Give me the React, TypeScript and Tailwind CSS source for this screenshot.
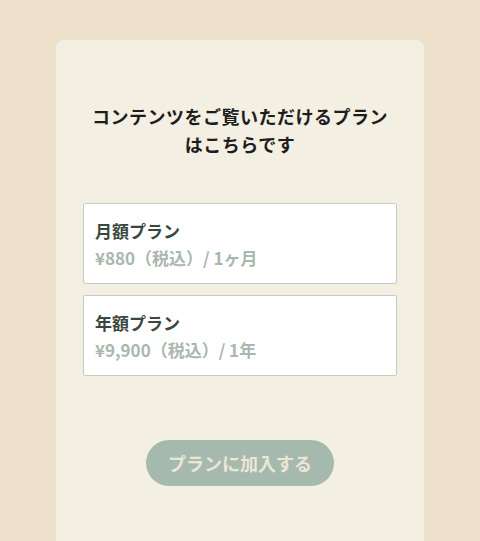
import React from "react";

const plans = [
  { id: "monthly", name: "月額プラン", price: "¥880（税込）/ 1ヶ月" },
  { id: "yearly", name: "年額プラン", price: "¥9,900（税込）/ 1年" },
];

export default function App() {
  return (
    <div
      className="min-h-[541px] bg-[#ede0ca] px-[56px] pt-[40px]"
      style={{ fontFamily: '"Noto Sans CJK JP", "Noto Sans", sans-serif' }}
    >
      <div className="min-h-[501px] rounded-t-[8px] bg-[#f3efe2] px-[27px] pt-[62px] pb-10">
        <h1 className="text-center text-[18px] font-bold leading-[28px] tracking-[0.5px] text-[#1d1d1d]">
          コンテンツをご覧いただけるプランはこちらです
        </h1>

        <ul className="mt-[45px] flex flex-col gap-[11px]">
          {plans.map((p) => (
            <li
              key={p.id}
              className="rounded-[2px] border border-[#c8cac3] bg-white px-[11px] pt-[13px] pb-[12px] leading-[27px]"
            >
              <div className="text-[17px] font-bold text-[#3b4840]">{p.name}</div>
              <div className="text-[17px] font-bold text-[#a9b7ae]">{p.price}</div>
            </li>
          ))}
        </ul>

        <div className="mt-[64px] flex justify-center">
          <button className="h-[46px] w-[188px] rounded-full bg-[#a6b9ae] text-[18px] font-bold text-[#ece6d6]">
            プランに加入する
          </button>
        </div>
      </div>
    </div>
  );
}
